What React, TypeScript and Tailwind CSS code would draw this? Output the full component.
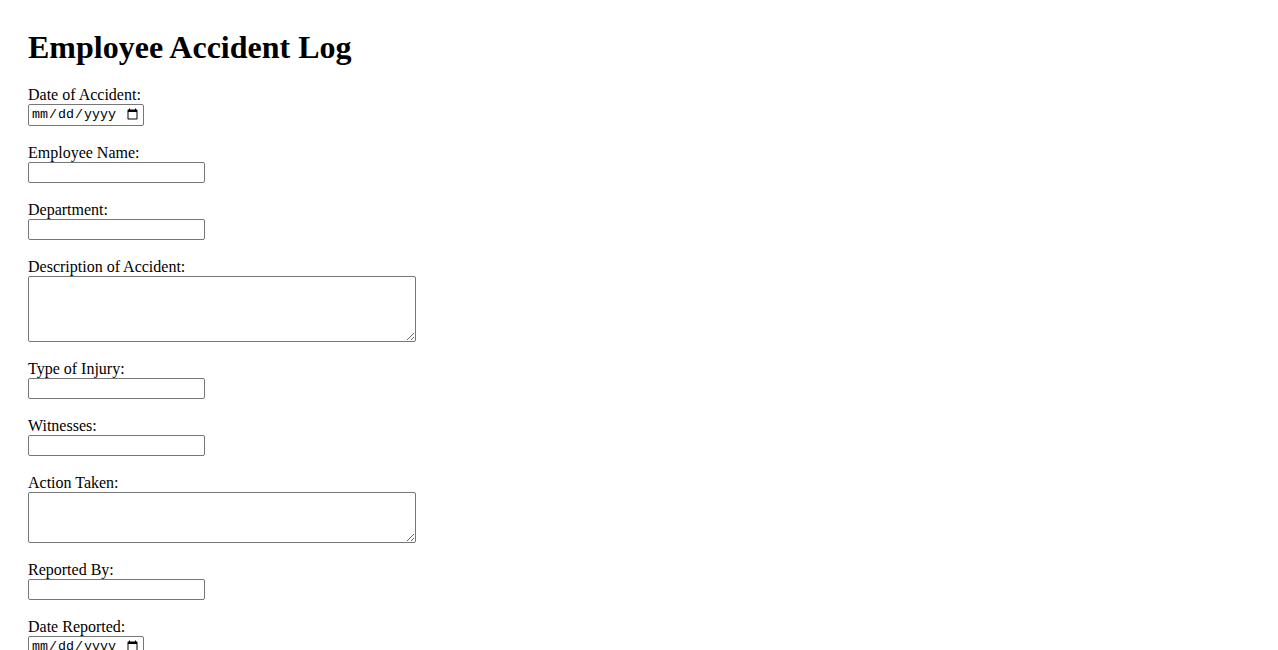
import React from 'react';

type Field = { id: string; label: string; kind: 'date' | 'text' | 'area'; rows?: number };

const FIELDS: Field[] = [
  { id: 'accidentDate', label: 'Date of Accident:', kind: 'date' },
  { id: 'employeeName', label: 'Employee Name:', kind: 'text' },
  { id: 'department', label: 'Department:', kind: 'text' },
  { id: 'description', label: 'Description of Accident:', kind: 'area', rows: 4 },
  { id: 'injuryType', label: 'Type of Injury:', kind: 'text' },
  { id: 'witnesses', label: 'Witnesses:', kind: 'text' },
  { id: 'actionTaken', label: 'Action Taken:', kind: 'area', rows: 3 },
  { id: 'reportedBy', label: 'Reported By:', kind: 'text' },
  { id: 'dateReported', label: 'Date Reported:', kind: 'date' },
];

const boxBase = 'block border border-[#767676] rounded-[2px] bg-white text-black';

export default function App() {
  return (
    <div className="min-h-screen bg-white text-black font-['Liberation_Serif','Times_New_Roman',serif] text-[16px] pt-[8px] px-[28px]">
      <h1 className="text-[32px] font-bold leading-[37px] mt-[21px] mb-[20px]">Employee Accident Log</h1>

      <form>
        {FIELDS.map((f) => (
          <div key={f.id} className="mb-[18px]">
            <label htmlFor={f.id} className="block leading-[18px] h-[18px]">
              {f.label}
            </label>
            {f.kind === 'date' && (
              <input
                id={f.id}
                type="date"
                className={`${boxBase} w-[116px] h-[22px] px-[2px] text-[13.33px] font-['Liberation_Mono','Courier_New',monospace]`}
              />
            )}
            {f.kind === 'text' && (
              <input
                id={f.id}
                type="text"
                className={`${boxBase} w-[177px] h-[21px] px-[2px] text-[13.33px] font-['Liberation_Sans',Arial,sans-serif]`}
              />
            )}
            {f.kind === 'area' && (
              <textarea
                id={f.id}
                rows={f.rows}
                className={`${boxBase} w-[388px] ${f.rows === 4 ? 'h-[66px]' : 'h-[51px]'} p-[2px] text-[13.33px] font-['Liberation_Mono','Courier_New',monospace] resize`}
              />
            )}
          </div>
        ))}
      </form>
    </div>
  );
}
